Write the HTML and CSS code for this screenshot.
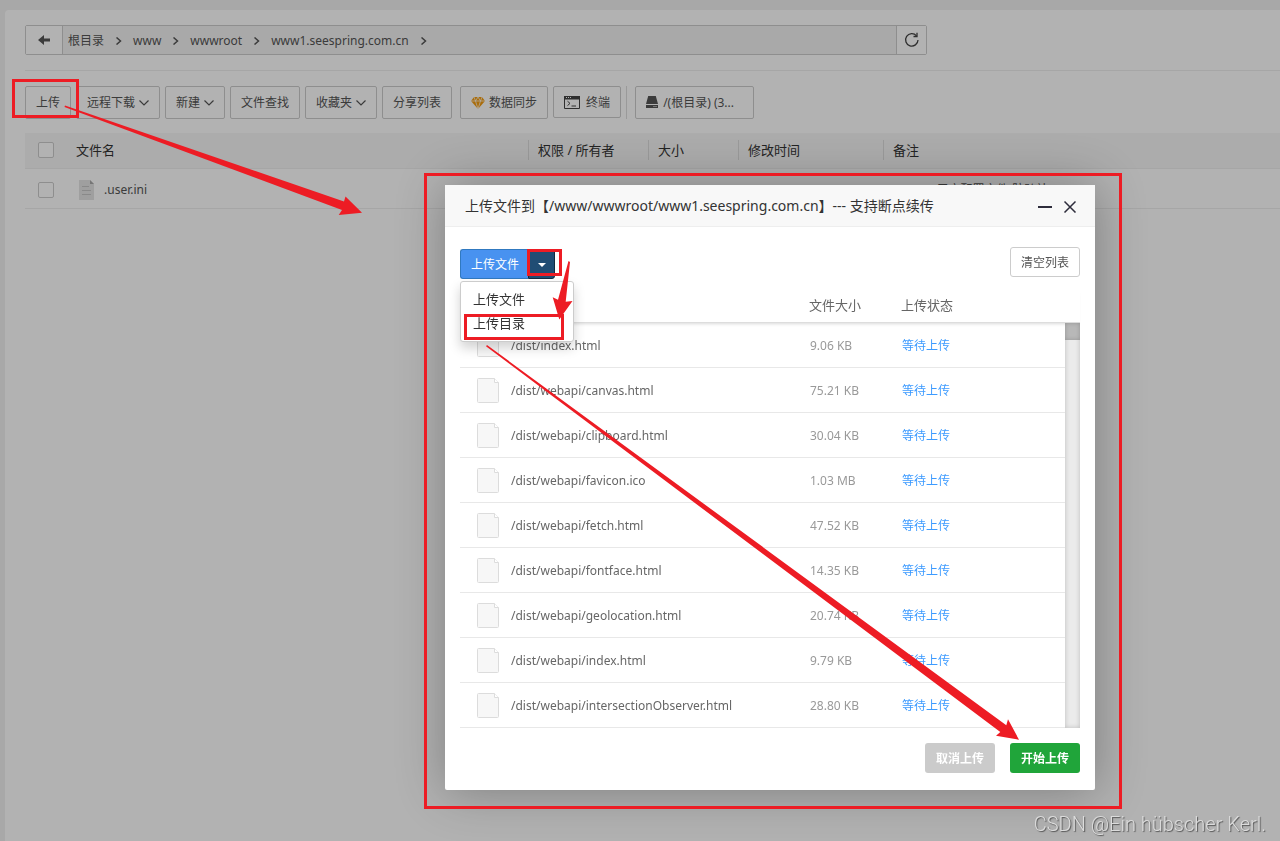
FILE: index.html
```html
<!DOCTYPE html>
<html lang="zh-CN">
<head>
<meta charset="utf-8">
<title>文件管理</title>
<link rel="stylesheet" href="styles.css">
</head>
<body>
<main class="panel">
  <nav class="path" aria-label="路径">
    <button class="path-end back" type="button" aria-label="返回"><svg width="12" height="10" viewBox="0 0 12 10"><path d="M0 5L6 0V3.400H12V6.600H6V10Z" fill="#555"/></svg></button>
    <div class="crumbs">
      <a href="#">根目录</a><svg class="sep" viewBox="0 0 7 8"><path d="M1.500.500L5.500 4L1.500 7.500"/></svg>
      <a href="#">www</a><svg class="sep" viewBox="0 0 7 8"><path d="M1.500.500L5.500 4L1.500 7.500"/></svg>
      <a href="#">wwwroot</a><svg class="sep" viewBox="0 0 7 8"><path d="M1.500.500L5.500 4L1.500 7.500"/></svg>
      <a href="#">www1.seespring.com.cn</a><svg class="sep" viewBox="0 0 7 8"><path d="M1.500.500L5.500 4L1.500 7.500"/></svg>
    </div>
    <button class="path-end reload" type="button" aria-label="刷新"><svg width="16" height="16" viewBox="0 0 16 16" fill="none" stroke="#444" stroke-width="1.300"><path d="M12.500 3.800A6.200 6.200 0 1 0 14 8"/><path d="M9.500 4.500H13V.800"/></svg></button>
  </nav>

  <div class="toolbar">
    <button class="btn" type="button">上传</button>
    <button class="btn" type="button">远程下载<svg class="down" viewBox="0 0 10 6"><path d="M.500.500L5 5L9.500.500"/></svg></button>
    <button class="btn" type="button">新建<svg class="down" viewBox="0 0 10 6"><path d="M.500.500L5 5L9.500.500"/></svg></button>
    <button class="btn" type="button">文件查找</button>
    <button class="btn" type="button">收藏夹<svg class="down" viewBox="0 0 10 6"><path d="M.500.500L5 5L9.500.500"/></svg></button>
    <button class="btn" type="button">分享列表</button>
    <button class="btn sync" type="button"><svg width="14" height="12" viewBox="0 0 14 12"><path d="M3 0H11L14 4L7 12L0 4Z" fill="#f39c12"/><path d="M0 4H14M3 0L4.500 4L7 12L9.500 4L11 0M4.500 4L7 0L9.500 4" fill="none" stroke="#fff" stroke-width=".7"/></svg>数据同步</button>
    <button class="btn term" type="button"><svg width="16" height="13" viewBox="0 0 16 13"><path d="M.500.500H15.500V12.500H.500Z" fill="none" stroke="#444"/><path d="M0 0H16V3.500H0Z" fill="#444"/><path d="M2 1.500H3M4 1.500H5M6 1.500H7" stroke="#fff"/><path d="M3.500 5.200L6 7.400L3.500 9.600M7.500 10H12" fill="none" stroke="#444"/></svg>终端</button>
    <span class="divider"></span>
    <button class="btn disk" type="button"><svg width="12" height="13" viewBox="0 0 12 13"><path d="M2.200 0H9.800L12 8H0ZM0 9H12V12H0Z" fill="#555"/><path d="M7.500 10.500H8.500M9.500 10.500H10.500" stroke="#fff"/></svg>/(根目录) (3...</button>
  </div>

  <table class="files">
    <colgroup><col class="c-check"><col class="c-name"><col class="c-owner"><col class="c-size"><col class="c-time"><col></colgroup>
    <thead><tr>
      <th><input type="checkbox" aria-label="全选"></th><th>文件名</th>
      <th><span>权限 / 所有者</span></th><th><span>大小</span></th><th><span>修改时间</span></th><th><span>备注</span></th>
    </tr></thead>
    <tbody><tr>
      <td><input type="checkbox" aria-label="选择 .user.ini"></td>
      <td><a class="file" href="#"><svg width="16" height="20" viewBox="0 0 16 20"><path d="M0 0H11L15 4V20H0Z" fill="#e4e4e4"/><path d="M11 0V4H15Z" fill="#aaa"/><path d="M3 6.500H10M3 10.500H12M3 14.500H12" stroke="#c4c4c4"/></svg>.user.ini</a></td>
      <td></td><td></td><td></td><td class="remark">PS: PHP用户配置文件(防跨站)!</td>
    </tr></tbody>
  </table>
</main>

<div class="shade"></div>

<section class="dialog" role="dialog" aria-labelledby="dialog-title">
  <header class="dialog-head">
    <h2 id="dialog-title">上传文件到【/www/wwwroot/www1.seespring.com.cn】--- 支持断点续传</h2>
    <button type="button" aria-label="最小化"><svg width="14" height="14" viewBox="0 0 14 14"><path d="M0 8H14" stroke="#2e2d3c" stroke-width="2"/></svg></button>
    <button type="button" aria-label="关闭"><svg width="14" height="14" viewBox="0 0 14 14"><path d="M1.500 2.500L12.500 13.500M12.500 2.500L1.500 13.500" stroke="#2e2d3c" stroke-width="1.500"/></svg></button>
  </header>
  <div class="dialog-body">
    <div class="actions">
      <div class="split">
        <button class="pick" type="button">上传文件</button><button class="toggle" type="button" aria-label="展开"><svg width="8" height="4" viewBox="0 0 8 4"><path d="M0 0H8L4 4Z" fill="#fff"/></svg></button>
        <div class="menu"><a href="#">上传文件</a><a href="#">上传目录</a></div>
      </div>
      <button class="clear" type="button">清空列表</button>
    </div>
    <table class="queue queue-head">
      <colgroup><col class="q-name"><col class="q-size"><col></colgroup>
      <thead><tr><th></th><th>文件大小</th><th>上传状态</th></tr></thead>
    </table>
    <div class="scroller">
      <table class="queue">
        <colgroup><col class="q-name"><col class="q-size"><col></colgroup>
        <tbody id="rows"></tbody>
      </table>
      <div class="bar"><div class="thumb"></div></div>
    </div>
    <footer class="foot">
      <button class="cancel" type="button">取消上传</button>
      <button class="start" type="button">开始上传</button>
    </footer>
  </div>
</section>

<svg class="marks" width="1280" height="841" viewBox="0 0 1280 841" aria-hidden="true">
  <g fill="none" stroke="#ed1c24" stroke-width="3">
    <rect x="13.500" y="80.500" width="64" height="36"/>
    <rect x="425.500" y="174.500" width="695" height="633"/>
    <rect x="528.500" y="250.500" width="32" height="24"/>
    <rect x="465.500" y="315.500" width="97" height="23"/>
  </g>
  <g fill="#ed1c24">
    <path d="M65 105.500L344 201.500L345.500 196.500L362 212.700L338.700 215L342 210L64.500 107Z"/>
    <path d="M568.500 261L570 262L565.700 301.700L572.500 301L559.300 319.500L552.700 297.300L558 299.700Z"/>
    <path d="M487 345L1006.300 725.300L1008 719.300L1019 739.700L996 735.700L1000.300 732L486 346.300Z"/>
  </g>
</svg>
<div class="credit">CSDN @Ein hübscher Kerl.</div>
<script src="rows.js"></script>
</body>
</html>
```
FILE: styles.css
```css
* { box-sizing: border-box; }
body {
  margin: 0;
  min-height: 100vh;
  padding: 10px 0 0 5px;
  display: flex;
  background: #f1f1f1;
  color: #555;
  font: 12px/20px "Noto Sans", "Noto Sans CJK SC", sans-serif;
  overflow: hidden;
}
a { color: inherit; text-decoration: none; }
button { font: inherit; color: inherit; cursor: pointer; margin: 0; }
svg { flex: none; }

.panel { flex: 1; min-width: 0; background: #fff; border-radius: 4px 0 0 0; }
.path { display: flex; height: 30px; max-width: 902px; margin: 15px 20px; border: 1px solid #ccc; border-radius: 2px; }
.path-end { display: flex; align-items: center; justify-content: center; border: 0; background: #fff; padding: 0; }
.back { width: 37px; border-right: 1px solid #ccc; }
.reload { width: 30px; border-left: 1px solid #ccc; }
.crumbs { flex: 1; display: flex; align-items: center; gap: 11px; padding: 1px 0 0 5px; background: #f3f3f3; }
.sep { width: 7px; height: 8px; fill: none; stroke: #555; stroke-width: 1.5; }

.toolbar { display: flex; gap: 5px; margin-left: 20px; padding: 15px 0 14px; border-top: 1px solid #eee; }
.btn { display: flex; align-items: center; gap: 4px; height: 33px; padding: 0 10px; border: 1px solid #ccc; border-radius: 2px; background: #fff; white-space: nowrap; }
.btn .down { width: 10px; height: 6px; fill: none; stroke: #555; stroke-width: 1.2; }
.sync { margin-left: 3px; }
.term { gap: 6px; height: 32px; padding-top: 1px; }
.divider { width: 1px; background: #ddd; }
.disk { width: 119px; gap: 5px; margin-left: 3px; }

.files { width: calc(100% - 20px); margin-left: 20px; table-layout: fixed; border-collapse: collapse; }
.files th, .files td { padding: 0; text-align: left; font-weight: 400; border-bottom: 1px solid #eee; white-space: nowrap; }
.files thead { background: #f6f6f6; color: #333; font-size: 13px; }
.files th { height: 35px; }
.files td { height: 40px; padding-top: 3px; }
.files th span { display: block; border-left: 1px solid #ddd; padding-left: 9px; }
.files input { appearance: none; display: block; width: 16px; height: 16px; margin: 0 0 0 13px; border: 1px solid #ccc; border-radius: 2px; background: #fff; }
.c-check { width: 51px; }
.c-name { width: 452px; }
.c-owner { width: 120px; }
.c-size { width: 90px; }
.c-time { width: 145px; }
.file { display: flex; align-items: center; gap: 9px; padding-left: 3px; }
.files .remark { padding-left: 10px; }

.shade { position: fixed; inset: 0; background: #000; opacity: .3; }

.dialog { position: absolute; left: 445px; top: 185px; width: 650px; background: #fff; border-radius: 2px; box-shadow: 1px 1px 50px rgba(0, 0, 0, .3); }
.dialog-head { display: flex; align-items: center; gap: 11px; height: 42px; padding: 0 18px 0 20px; background: #f8f8f8; border-bottom: 1px solid #eee; }
.dialog-head h2 { flex: 1; margin: 0; font-size: 14px; font-weight: 400; color: #333; white-space: nowrap; }
.dialog-head button { display: flex; padding: 0; border: 0; background: none; }
.dialog-body { padding: 20px 15px 17px; }
.actions { display: flex; justify-content: space-between; }
.split { position: relative; display: flex; height: 30px; margin-top: 2px; color: #fff; }
.pick { padding: 1px 9px 0 10px; border: 1px solid #3079c0; border-right: 0; border-radius: 3px 0 0 3px; background: #4892f0; }
.toggle { display: flex; align-items: center; justify-content: center; width: 27px; padding: 2px 0 0; border: 1px solid #122b40; border-radius: 0 3px 3px 0; background: #204d74; }
.menu { position: absolute; z-index: 2; left: 0; top: 32px; width: 114px; padding: 5px 0 6px; border: 1px solid #ccc; border-radius: 3px; background: #fff; box-shadow: 0 6px 12px rgba(0, 0, 0, .18); color: #333; font-size: 13px; line-height: 24px; }
.menu a { display: block; padding-left: 12px; }
.clear { height: 30px; padding: 1px 10px 0; border: 1px solid #ccc; border-radius: 3px; background: #fff; }

.queue { width: 100%; table-layout: fixed; border-collapse: collapse; }
.queue th, .queue td { padding: 0; text-align: left; font-weight: 400; }
.queue th { height: 34px; font-size: 13px; color: #666; }
.queue-head { margin-top: 9px; border-bottom: 1px solid #ddd; box-shadow: 0 3px 3px -2px rgba(0, 0, 0, .15); }
.queue td { height: 45px; border-bottom: 1px solid #e8e8e8; color: #999; padding: 2px 0 0 1px; }
.queue .entry { display: flex; align-items: center; gap: 12px; padding-left: 16px; color: #666; }
.queue .entry svg { margin-bottom: 2px; }
.queue .wait { color: #3d9bff; }
.q-name { width: 349px; }
.q-size { width: 92px; }
.scroller { display: flex; }
.bar { flex: none; width: 15px; background: #ebebeb; box-shadow: inset 0 0 5px rgba(0, 0, 0, .2); }
.thumb { height: 17px; background: #b8b8b8; box-shadow: inset 0 0 4px rgba(0, 0, 0, .2); }
.foot { display: flex; justify-content: flex-end; gap: 15px; margin-top: 15px; color: #fff; font-weight: 700; }
.foot button { height: 30px; padding: 2px 11px 0; border: 0; border-radius: 3px; }
.foot .cancel { background: #cbcbcb; }
.foot .start { background: #20a53a; }

.marks { position: absolute; z-index: 3; left: 0; top: 0; pointer-events: none; }
.credit { position: absolute; right: 14px; bottom: 5px; font: 20px/24px Roboto, sans-serif; font-weight: 300; color: #dcdcdc; text-shadow: 1px 1px 1px #555; }
```
FILE: rows.js
```javascript
const files = [
  ["index.html", "9.06 KB"],
  ["webapi/canvas.html", "75.21 KB"],
  ["webapi/clipboard.html", "30.04 KB"],
  ["webapi/favicon.ico", "1.03 MB"],
  ["webapi/fetch.html", "47.52 KB"],
  ["webapi/fontface.html", "14.35 KB"],
  ["webapi/geolocation.html", "20.74 KB"],
  ["webapi/index.html", "9.79 KB"],
  ["webapi/intersectionObserver.html", "28.80 KB"]
];
const icon = '<svg width="22" height="25" viewBox="0 0 22 25"><path d="M1.500.500H17.500L21.500 4.500V23.500Q21.500 24.500 20.500 24.500H1.500Q.500 24.500 .500 23.500V1.500Q.500.500 1.500.500Z" fill="#f7f7f7" stroke="#dcdcdc"/><path d="M17.500.500V4.500H21.500" fill="#fff" stroke="#dcdcdc"/></svg>';
document.getElementById("rows").innerHTML = files.map(([name, size]) =>
  `<tr><td><div class="entry">${icon}/dist/${name}</div></td><td>${size}</td><td class="wait">等待上传</td></tr>`
).join("");
```
